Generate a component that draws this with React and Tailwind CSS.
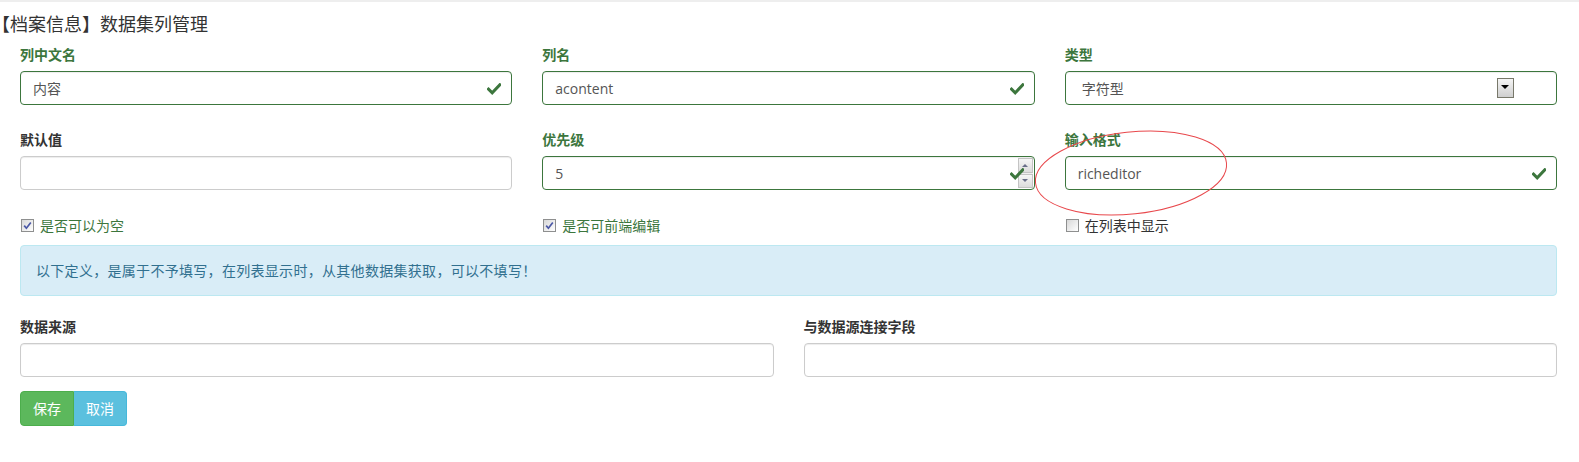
import React from 'react';

const okColor = '#3c763d';

function OkIcon() {
    return (
        <svg width="14" height="12" viewBox="0 0 14 12" className="block">
            <path d="M1.5 6.2 L5.2 9.8 L12.8 1.8" stroke={okColor} strokeWidth="3" fill="none" strokeLinecap="square" />
        </svg>
    );
}

function FieldLabel({ children, ok = true }) {
    return (
        <div className={`h-5 leading-5 text-[14px] font-bold mb-[6px] ${ok ? 'text-[#3c763d]' : 'text-[#333]'}`}>
            {children}
        </div>
    );
}

function OkInput({ value, extra }) {
    return (
        <div className="relative h-[34px] rounded-[4px] border border-[#3c763d] bg-white shadow-[inset_0_1px_1px_rgba(0,0,0,0.075)] flex items-center pl-3 text-[14px] text-[#555]">
            <span>{value}</span>
            {extra}
            <span className="absolute right-[10px] top-[11px]">
                <OkIcon />
            </span>
        </div>
    );
}

function PlainInput() {
    return (
        <div className="h-[34px] rounded-[4px] border border-[#ccc] bg-white shadow-[inset_0_1px_1px_rgba(0,0,0,0.075)]" />
    );
}

function Check({ checked, ok = true, children }) {
    return (
        <label className={`flex items-center h-5 text-[14px] ${ok ? 'text-[#3c763d]' : 'text-[#333]'}`}>
            <span className="ml-[1px] mr-[6px] inline-flex w-[13px] h-[13px] border border-[#8e8f8f] bg-linear-to-br from-[#d8d8d8] to-white items-center justify-center">
                {checked && (
                    <svg width="9" height="9" viewBox="0 0 9 9">
                        <path d="M1.2 4.6 L3.4 7.2 L7.8 1.4" stroke="#4b58a6" strokeWidth="1.7" fill="none" />
                    </svg>
                )}
            </span>
            {children}
        </label>
    );
}

function Spinner() {
    return (
        <span className="absolute right-[1px] top-[1px] bottom-[1px] w-[15px] flex flex-col gap-[1px] bg-[#eee]">
            <span className="flex-1 flex items-center justify-center bg-linear-to-b from-[#f6f6f6] to-[#dcdcdc] border border-[#c4c4c4]">
                <span className="w-0 h-0 border-l-[3px] border-r-[3px] border-b-[3px] border-l-transparent border-r-transparent border-b-[#6a6f8a]" />
            </span>
            <span className="flex-1 flex items-center justify-center bg-linear-to-b from-[#f6f6f6] to-[#dcdcdc] border border-[#c4c4c4]">
                <span className="w-0 h-0 border-l-[3px] border-r-[3px] border-t-[3px] border-l-transparent border-r-transparent border-t-[#6a6f8a]" />
            </span>
        </span>
    );
}

function SelectBox({ value }) {
    return (
        <div className="relative h-[34px] rounded-[4px] border border-[#3c763d] bg-white shadow-[inset_0_1px_1px_rgba(0,0,0,0.075)] flex items-center pl-[16px] text-[14px] text-[#555]">
            <span>{value}</span>
            <span className="absolute right-[42px] top-[6px] w-[17px] h-[20px] border border-[#78786a] bg-linear-to-b from-[#f5f5f5] to-[#cfcfcf] flex justify-center pt-[6px]">
                <span className="w-0 h-0 border-l-[4px] border-r-[4px] border-t-[4px] border-l-transparent border-r-transparent border-t-black" />
            </span>
        </div>
    );
}

export default function App() {
    return (
        <div className="relative w-[1579px] h-[462px] bg-white overflow-hidden font-['Open_Sans','Noto_Sans_CJK_SC',sans-serif]">
            <div className="h-[2px] bg-[#eeeeee]" />
            <h1 className="mt-[10px] ml-[-8px] h-6 leading-6 text-[18px] text-[#333] font-normal">
                【档案信息】数据集列管理
            </h1>

            <div className="ml-[5px] w-[1567px] mt-[9px] grid grid-cols-3">
                <div className="px-[15px]">
                    <FieldLabel>列中文名</FieldLabel>
                    <OkInput value="内容" />
                </div>
                <div className="px-[15px]">
                    <FieldLabel>列名</FieldLabel>
                    <OkInput value="acontent" />
                </div>
                <div className="px-[15px]">
                    <FieldLabel>类型</FieldLabel>
                    <SelectBox value="字符型" />
                </div>
            </div>

            <div className="ml-[5px] w-[1567px] mt-[25px] grid grid-cols-3">
                <div className="px-[15px]">
                    <FieldLabel ok={false}>默认值</FieldLabel>
                    <PlainInput />
                </div>
                <div className="px-[15px]">
                    <FieldLabel>优先级</FieldLabel>
                    <OkInput value="5" extra={<Spinner />} />
                </div>
                <div className="px-[15px]">
                    <FieldLabel>输入格式</FieldLabel>
                    <OkInput value="richeditor" />
                </div>
            </div>

            <div className="ml-[5px] w-[1567px] mt-[25px] grid grid-cols-3">
                <div className="px-[15px]">
                    <Check checked>是否可以为空</Check>
                </div>
                <div className="px-[15px]">
                    <Check checked>是否可前端编辑</Check>
                </div>
                <div className="px-[15px]">
                    <Check ok={false}>在列表中显示</Check>
                </div>
            </div>

            <div className="ml-[20px] w-[1537px] mt-[10px] h-[51px] rounded-[4px] border border-[#bce8f1] bg-[#d9edf7] text-[#31708f] text-[14px] tracking-[0.3px] flex items-center px-[15px]">
                以下定义，是属于不予填写，在列表显示时，从其他数据集获取，可以不填写！
            </div>

            <div className="ml-[5px] w-[1567px] mt-[21px] grid grid-cols-2">
                <div className="px-[15px]">
                    <FieldLabel ok={false}>数据来源</FieldLabel>
                    <PlainInput />
                </div>
                <div className="px-[15px]">
                    <FieldLabel ok={false}>与数据源连接字段</FieldLabel>
                    <PlainInput />
                </div>
            </div>

            <div className="ml-[20px] mt-[14px] flex h-[35px] text-[14px] text-white">
                <button type="button" className="w-[54px] rounded-l-[4px] bg-[#5cb85c] border border-[#4cae4c]">
                    保存
                </button>
                <button type="button" className="w-[53px] rounded-r-[4px] bg-[#5bc0de] border border-[#46b8da] border-l-0">
                    取消
                </button>
            </div>

            <svg className="absolute left-[1025px] top-[125px] pointer-events-none" width="212" height="96" viewBox="0 0 212 96">
                <ellipse cx="106" cy="48" rx="96" ry="41" transform="rotate(-6 106 48)" fill="none" stroke="#e8484c" strokeWidth="1" />
            </svg>
        </div>
    );
}
